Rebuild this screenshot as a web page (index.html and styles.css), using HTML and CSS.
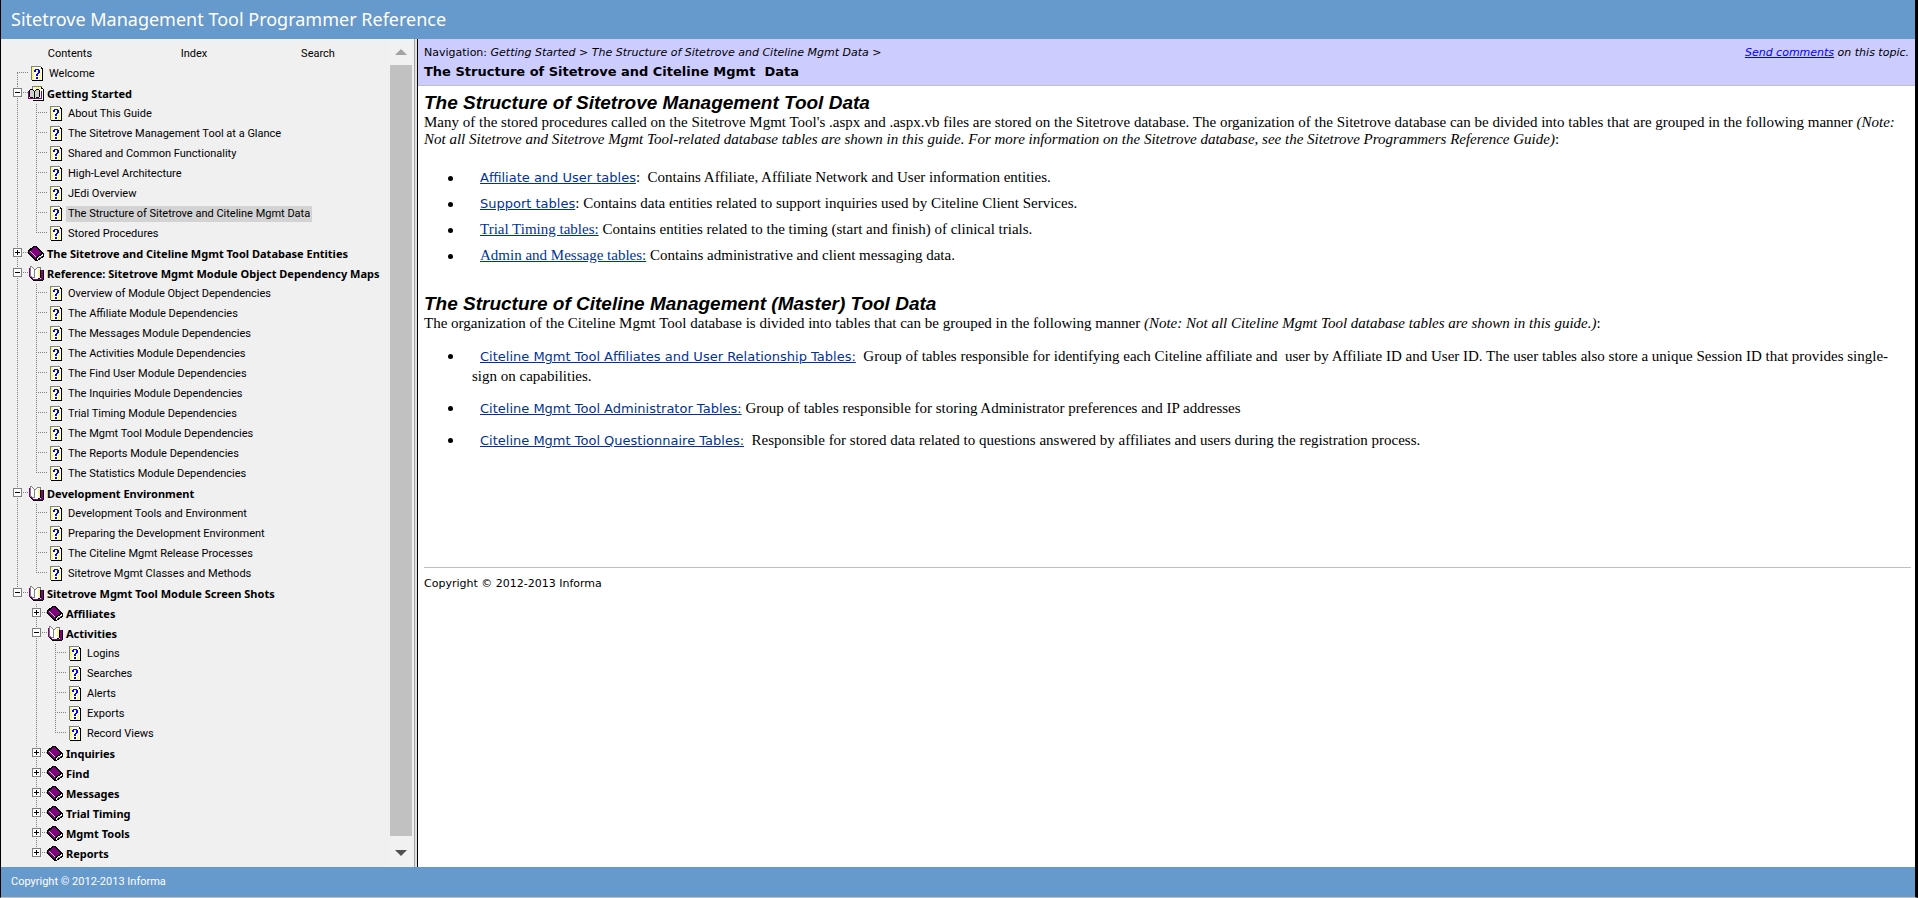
FILE: index.html
```html
<!DOCTYPE html>
<html lang="en">
<head>
<meta charset="utf-8">
<title>Sitetrove Management Tool Programmer Reference</title>
<link rel="stylesheet" href="styles.css">
</head>
<body>
<svg class="symbols" aria-hidden="true">
  <symbol id="page" viewBox="0 0 16 16" shape-rendering="crispEdges">
    <path fill="#fff" d="M0 0h10l2 2v13H0z"/>
    <path stroke="#ff0" stroke-dasharray="1 1" d="M1.500 1v13M2.500 2v12M9.500 2v12M8.500 3v11" fill="none"/>
    <path fill="#808080" d="M0 0h10v1H0zM0 0h1v14H0z"/>
    <path fill="#000" d="M11 3h1v12H1v-1h10zM10 1h1v1h1v1h-2z"/>
    <path fill="#00f" d="M4 3h4v1H4zM3 4h2v2H3zM7 4h2v3H7zM6 7h2v1H6zM5 8h2v2H5zM5 11h2v2H5z"/>
  </symbol>
  <symbol id="closed" viewBox="0 0 16 16" shape-rendering="crispEdges">
    <path fill="#000" d="M6 0h2l7 6v1h1v4l-7 4H7L1 8H0V4z"/>
    <path fill="#800080" d="M6 1h1l7 6-6 4-6-6z"/>
    <path fill="#800080" d="M1 5l7 7v2L1 7z"/>
    <path fill="#fff" d="M9 12l6-4v2l-6 4z"/>
    <path fill="#808080" d="M10 13h1v-1h2v-1h1v-1h-1v1h-2v1h-1z"/>
    <path fill="#c0c0c0" d="M2 5h1v1H2zM3 6h1v1H3zM4 7h1v1H4zM5 8h1v1H5zM6 9h1v1H6zM7 10h1v1H7z"/>
  </symbol>
  <symbol id="open" viewBox="0 0 16 16" shape-rendering="crispEdges">
    <path fill="#800080" d="M1 2h2v9l3 2h7V4h2v10H5l-4-3z"/>
    <path fill="#000" d="M15 4h1v10h-1zM5 14h10v1H5zM4 13h1v1H4zM3 12h1v1H3zM2 11h1v1H2zM12 4h1v8h-1zM6 12h6v1H6z"/>
    <path fill="#fff" d="M3 1l4 3v9l-4-3zM7 4l2-3h3v10l-3 2H7z"/>
    <path fill="#808080" d="M2 0h1v11H2zM3 0h1v1H3zM4 1h1v1H4zM5 2h1v1H5zM6 3h1v9H6zM7 3h1v1H7zM8 2h1v1H8zM9 1h3v1H9zM12 1h1v3h-1zM3 10h1v1H3zM4 11h2v1H4z"/>
    <path fill="#ff0" d="M10 3h1v1h-1zM11 4h1v1h-1zM10 5h1v1h-1zM11 6h1v1h-1zM10 7h1v1h-1zM11 8h1v1h-1zM10 9h1v1h-1zM11 10h1v1h-1z"/>
  </symbol>
  <symbol id="current" viewBox="0 0 16 16" shape-rendering="crispEdges">
    <path fill="#fff" d="M4 0h10l1 3v11H4z"/>
    <path fill="#808080" d="M4 0h10v1H4zM4 0h1v4H4z"/>
    <path fill="#ff0" d="M6 1h1v1H6zM8 1h1v1H8zM10 1h1v1h-1zM12 1h1v1h-1zM7 2h1v1H7zM9 2h1v1H9zM11 2h1v1h-1zM13 4h1v1h-1zM13 6h1v1h-1zM13 8h1v1h-1z"/>
    <path fill="#000" d="M13 1h1v1h1v1h1v12H5v-1h10V3h-2z"/>
    <path fill="#800080" d="M0 5h1v7h12V5h1v8H0z"/>
    <path fill="#000" d="M2 3h3v1H2zM1 4h1v7H1zM5 4h1v1H5zM6 5h1v8H6zM7 4h1v1H7zM8 3h3v1H8zM11 4h1v7h-1zM2 11h3v1H2zM8 11h3v1H8z"/>
    <path fill="#d0d0d0" d="M2 4h3v1h1v7H5v-1H2zM8 4h3v7H8v1H7V5h1z"/>
  </symbol>
</svg>
<div class="app">
  <header class="banner">Sitetrove Management Tool Programmer Reference</header>
  <div class="panes">
    <aside class="sidebar">
      <div class="side-main">
        <nav class="tabs"><a href="#">Contents</a><a href="#">Index</a><a href="#">Search</a></nav>
        <ul class="tree" id="tree"></ul>
      </div>
      <div class="scrollbar">
        <svg class="arrow" viewBox="0 0 12 6"><path fill="#a3a3a3" d="M0 6l6-6 6 6z"/></svg>
        <div class="thumb"></div>
        <svg class="arrow" viewBox="0 0 12 6"><path fill="#505050" d="M0 0h12l-6 6z"/></svg>
      </div>
    </aside>
    <div class="splitter"></div>
    <main class="content">
      <div class="topic-head">
        <div>
          <p class="crumbs">Navigation: <i>Getting Started &gt; The Structure of Sitetrove and Citeline Mgmt Data &gt;</i></p>
          <p class="topic-title">The Structure of Sitetrove and Citeline Mgmt&nbsp; Data</p>
        </div>
        <p class="comments"><a href="#">Send comments</a> on this topic.</p>
      </div>
      <article class="topic">
        <h1>The Structure of Sitetrove Management Tool Data</h1>
        <p>Many of the stored procedures called on the Sitetrove Mgmt Tool's .aspx and .aspx.vb files are stored on the Sitetrove database. The organization of the Sitetrove database can be divided into tables that are grouped in the following manner <i>(Note: Not all Sitetrove and Sitetrove Mgmt Tool-related database tables are shown in this guide. For more information on the Sitetrove database, see the Sitetrove Programmers Reference Guide)</i>:</p>
        <ul class="first-list">
          <li><a class="wide" href="#">Affiliate and User tables</a>:&nbsp; Contains Affiliate, Affiliate Network and User information entities.</li>
          <li><a class="wide" href="#">Support tables</a>: Contains data entities related to support inquiries used by Citeline Client Services.</li>
          <li><a href="#">Trial Timing tables:</a> Contains entities related to the timing (start and finish) of clinical trials.</li>
          <li><a href="#">Admin and Message tables:</a> Contains administrative and client messaging data.</li>
        </ul>
        <h1>The Structure of Citeline Management (Master) Tool Data</h1>
        <p>The organization of the Citeline Mgmt Tool database is divided into tables that can be grouped in the following manner <i>(Note: Not all Citeline Mgmt Tool database tables are shown in this guide.)</i>:</p>
        <ul class="second-list">
          <li><a class="wide" href="#">Citeline Mgmt Tool Affiliates and User Relationship Tables:</a>&nbsp; Group of tables responsible for identifying each Citeline affiliate and&nbsp; user by Affiliate ID and User ID. The user tables also store a unique Session ID that provides single-sign on capabilities.</li>
          <li><a class="wide" href="#">Citeline Mgmt Tool Administrator Tables:</a> Group of tables responsible for storing Administrator preferences and IP addresses</li>
          <li><a class="wide" href="#">Citeline Mgmt Tool Questionnaire Tables:</a>&nbsp; Responsible for stored data related to questions answered by affiliates and users during the registration process.</li>
        </ul>
        <p class="copyright">Copyright © 2012-2013 Informa</p>
      </article>
    </main>
  </div>
  <footer class="foot">Copyright © 2012-2013 Informa</footer>
</div>
<script src="tree.js"></script>
</body>
</html>
```
FILE: tree.js
```js
const topics = [
  "Welcome",
  { name: "Getting Started", icon: "current", items: ["About This Guide", "The Sitetrove Management Tool at a Glance", "Shared and Common Functionality", "High-Level Architecture", "JEdi Overview", "The Structure of Sitetrove and Citeline Mgmt Data", "Stored Procedures"] },
  { name: "The Sitetrove and Citeline Mgmt Tool Database Entities" },
  { name: "Reference: Sitetrove Mgmt Module Object Dependency Maps", items: ["Overview of Module Object Dependencies", "The Affiliate Module Dependencies", "The Messages Module Dependencies", "The Activities Module Dependencies", "The Find User Module Dependencies", "The Inquiries Module Dependencies", "Trial Timing Module Dependencies", "The Mgmt Tool Module Dependencies", "The Reports Module Dependencies", "The Statistics Module Dependencies"] },
  { name: "Development Environment", items: ["Development Tools and Environment", "Preparing the Development Environment", "The Citeline Mgmt Release Processes", "Sitetrove Mgmt Classes and Methods"] },
  { name: "Sitetrove Mgmt Tool Module Screen Shots", items: [
    { name: "Affiliates" },
    { name: "Activities", items: ["Logins", "Searches", "Alerts", "Exports", "Record Views"] },
    { name: "Inquiries" }, { name: "Find" }, { name: "Messages" }, { name: "Trial Timing" }, { name: "Mgmt Tools" }, { name: "Reports" }
  ] }
];
const selected = "The Structure of Sitetrove and Citeline Mgmt Data";

function render(list) {
  return list.map(t => {
    if (typeof t === "string") {
      return `<li><div class="row leaf"><svg class="icon"><use href="#page"/></svg><a href="#"${t === selected ? ' class="selected"' : ""}>${t}</a></div></li>`;
    }
    const open = !!t.items;
    return `<li><div class="row folder"><button class="toggle ${open ? "minus" : "plus"}" aria-label="Toggle ${t.name}"></button><svg class="icon"><use href="#${t.icon || (open ? "open" : "closed")}"/></svg><a href="#">${t.name}</a></div>${open ? `<ul>${render(t.items)}</ul>` : ""}</li>`;
  }).join("");
}
document.getElementById("tree").innerHTML = render(topics);
```
FILE: styles.css
```css
* { box-sizing: border-box; }
body { margin: 0; background: #fff; }
p, ul, h1 { margin: 0; padding: 0; }
ul { list-style: none; }
.symbols { display: none; }
.app {
  display: flex;
  flex-direction: column;
  height: 100vh;
  border-left: 1px solid #000;
  border-right: 3px solid #000;
  border-bottom: 1px solid #c0c0c0;
}
.banner {
  flex: none;
  height: 39px;
  padding-left: 10px;
  background: #69c;
  color: #fff;
  font: 18px/38px "Noto Sans", sans-serif;
}
.foot {
  flex: none;
  height: 30px;
  padding-left: 10px;
  background: #69c;
  color: #fff;
  font: 11px/30px Roboto, sans-serif;
}
.panes { display: flex; flex: 1; min-height: 0; }

.sidebar {
  display: flex;
  width: 413px;
  background: #f0f0f0;
  font: 11px/20px Roboto, sans-serif;
}
.sidebar a { color: #000; text-decoration: none; white-space: nowrap; }
.side-main { flex: 1; padding: 5px 0 0 7px; overflow: hidden; }
.tabs { display: grid; grid-template-columns: repeat(3, 124px); text-align: center; }
.scrollbar {
  display: flex;
  flex-direction: column;
  align-items: center;
  width: 24px;
  padding-right: 2px;
  background: #f1f1f1;
}
.arrow { flex: none; width: 12px; height: 6px; margin: 10px 0; }
.thumb { flex: 1; width: 22px; background: #c1c1c1; }
.scrollbar .arrow:last-child { margin: 14px 0 11px; }
.splitter {
  width: 4px;
  background: linear-gradient(90deg, #a0a0a0 0 1px, #e0e0e0 1px 3px, #000 3px);
}

.tree li {
  background: repeating-linear-gradient(#808080 0 1px, transparent 1px 2px) 9px 0 / 1px 100% no-repeat;
}
.tree li:last-child { background-size: 1px 9px; }
.tree > li:first-child { background-position: 9px 9px; }
.tree ul { margin-left: 19px; }
.row {
  display: flex;
  align-items: center;
  height: 20px;
  background: repeating-linear-gradient(90deg, #808080 0 1px, transparent 1px 2px) 9px 8px / 12px 1px no-repeat;
}
.icon { width: 16px; height: 16px; flex: none; }
.leaf { padding-left: 23px; }
.leaf a { padding: 0 2px; line-height: 16px; }
.folder { padding-left: 5px; font: bold 11px/20px "Noto Sans", sans-serif; }
.folder .icon { margin: 0 3px 0 6px; }
.toggle {
  width: 9px;
  height: 9px;
  margin: 0 0 3px;
  padding: 0;
  border: 1px solid #808080;
  border-radius: 0;
  background: linear-gradient(#000, #000) center / 5px 1px no-repeat, #fff;
}
.plus {
  background: linear-gradient(#000, #000) center / 5px 1px no-repeat, linear-gradient(#000, #000) center / 1px 5px no-repeat, #fff;
}
.sidebar .selected { background: #d3d3d3; }

.content { flex: 1; min-width: 0; overflow: hidden; background: #fff; }
.topic-head {
  display: flex;
  justify-content: space-between;
  height: 47px;
  padding: 6px 6px 0 6px;
  border-bottom: 1px solid #c0c0c0;
  background: #ccf;
  font: 11px/16px "DejaVu Sans", sans-serif;
}
.comments { font-style: italic; }
.comments a { color: #00f; }
.topic-title { padding-top: 3px; font-size: 13px; font-weight: bold; }
.topic { padding: 6px 4px 0 6px; font: 15px/17px "Liberation Serif", serif; }
.topic h1 { font: italic bold 19px/22px "Liberation Sans", sans-serif; }
.topic a { color: #039; }
.wide { font: 13px/16px "DejaVu Sans", sans-serif; }
.topic li { position: relative; padding-left: 48px; text-indent: 8px; }
.topic li::before {
  content: "";
  position: absolute;
  left: 24px;
  top: 12px;
  width: 5px;
  height: 5px;
  border-radius: 50%;
  background: #000;
}
.first-list { padding: 16px 0 25px; line-height: 26px; }
.second-list { padding-top: 14px; line-height: 20px; }
.second-list li { padding-bottom: 12px; }
.second-list li::before { top: 8px; }
.copyright {
  margin-top: 105px;
  padding-top: 8px;
  border-top: 1px solid #c0c0c0;
  font: 11px/16px "DejaVu Sans", sans-serif;
}
```
